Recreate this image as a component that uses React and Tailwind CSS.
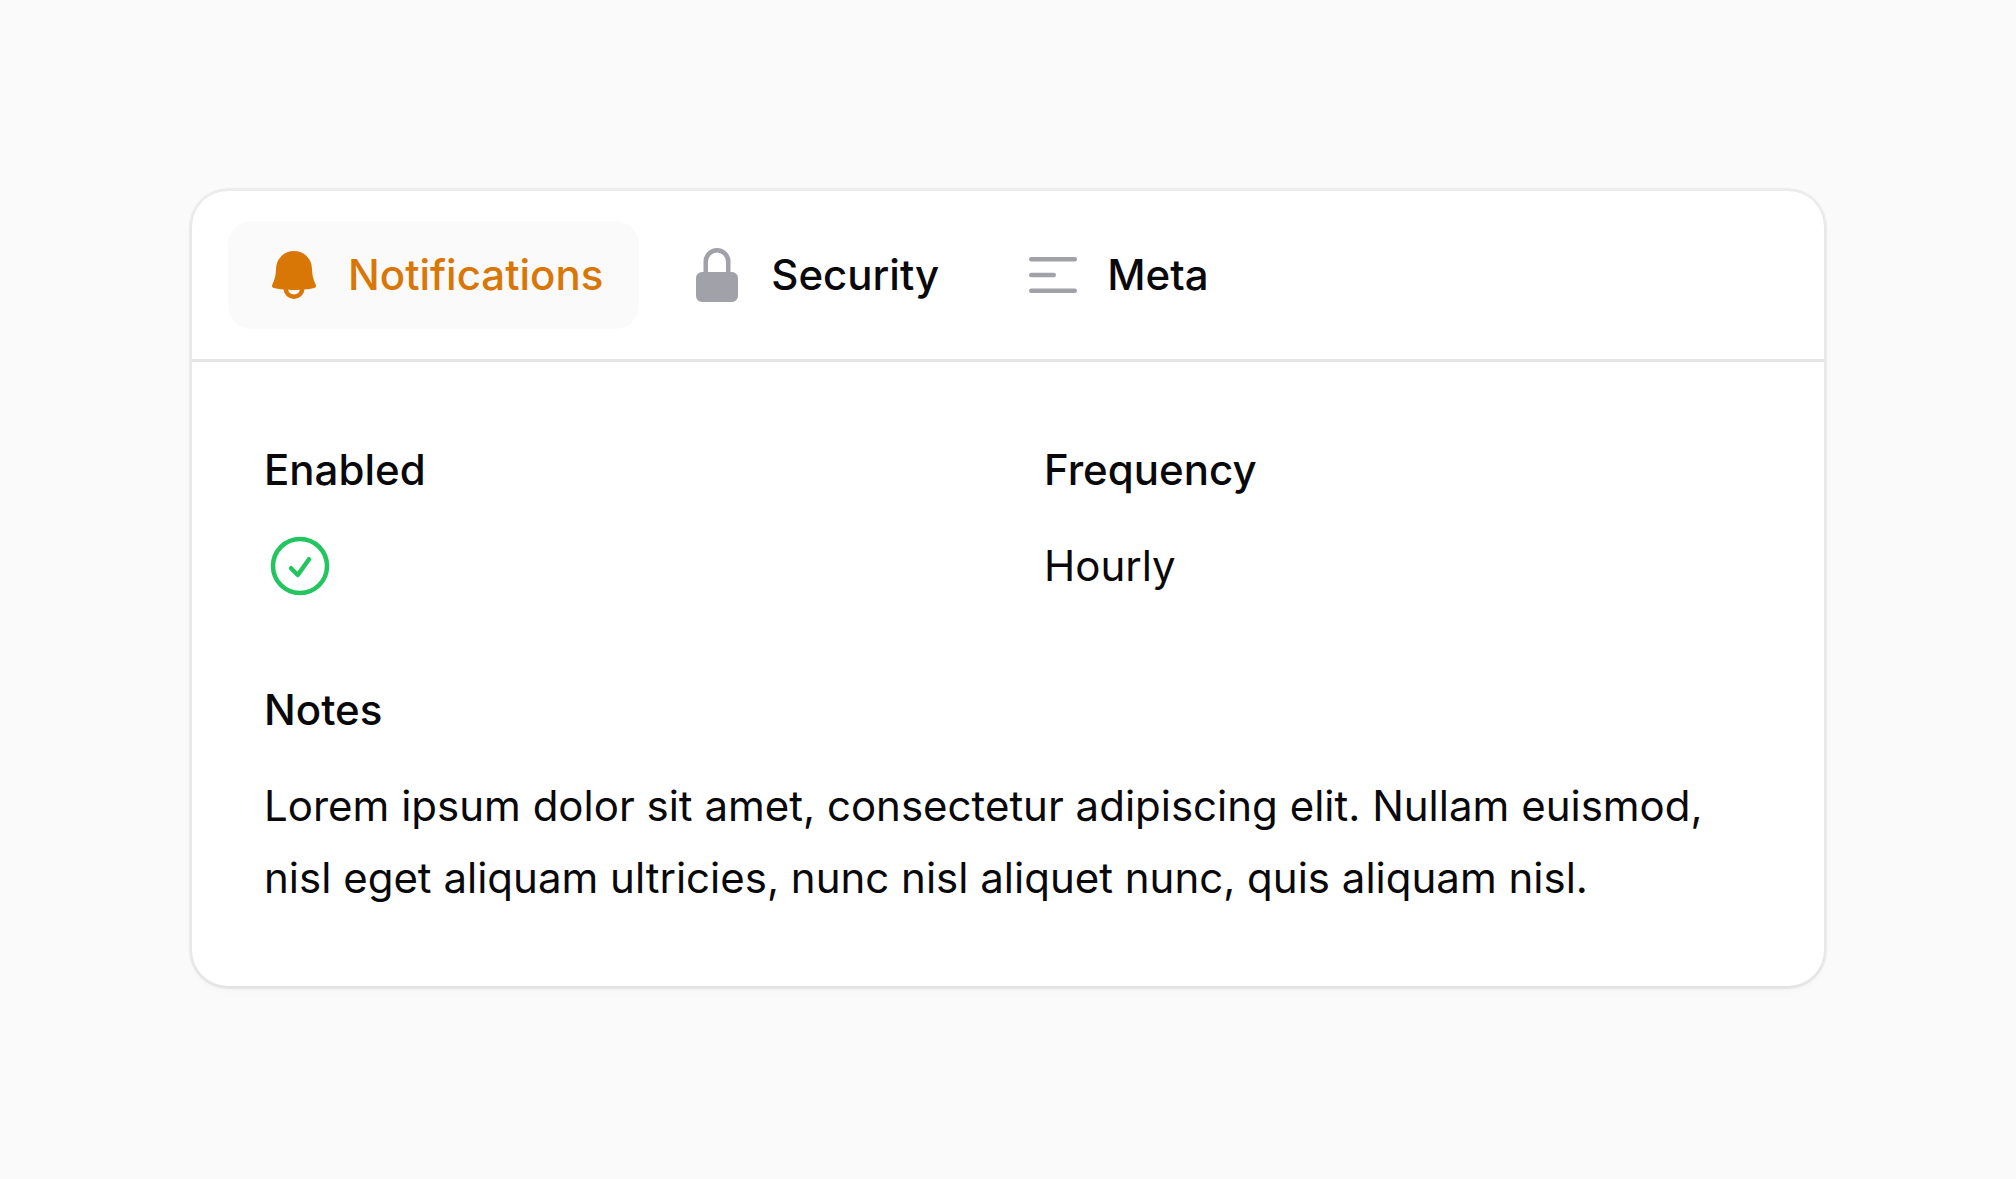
import { useState } from 'react';
import { HiMiniBars3CenterLeft, HiMiniBell, HiMiniLockClosed, HiOutlineCheckCircle } from 'react-icons/hi2';

const tabs = [
    { id: 'notifications', label: 'Notifications', Icon: HiMiniBell },
    { id: 'security', label: 'Security', Icon: HiMiniLockClosed },
    { id: 'meta', label: 'Meta', Icon: HiMiniBars3CenterLeft },
];

function Entry({ label, className, children }) {
    return (
        <div className={className}>
            <dt className="font-medium">{label}</dt>
            <dd className="mt-6">{children}</dd>
        </div>
    )
}

export default function App(){
    const [active, setActive] = useState('notifications');

    return(
        <div className="min-h-screen bg-[#fafafa] px-48 pt-[191px] pb-48 font-['Inter',sans-serif] text-[42px] leading-[72px] text-zinc-950">
            <div className="rounded-[36px] bg-white shadow-[0_3px_6px_0_rgb(0_0_0/0.05)] ring-3 ring-zinc-950/5">
                <div role="tablist" aria-label="Settings" className="flex gap-3 border-b-3 border-[#e4e4e5] px-9 py-[30px]">
                    {tabs.map(({ id, label, Icon }) => (
                        <button
                            key={id}
                            type="button"
                            role="tab"
                            aria-selected={active === id}
                            onClick={() => setActive(id)}
                            className={
                                active === id
                                    ? 'flex items-center gap-6 rounded-3xl bg-[#fafafa] px-9 py-[18px] font-medium text-[#d97706]'
                                    : 'flex items-center gap-6 rounded-3xl px-9 py-[18px] font-medium'
                            }
                        >
                            <Icon className={active === id ? 'size-[60px]' : 'size-[60px] text-[#a1a1aa]'} aria-hidden="true" />
                            {label}
                        </button>
                    ))}
                </div>
                <dl role="tabpanel" className="grid grid-cols-2 gap-[72px] p-[72px]">
                    <Entry label="Enabled">
                        <HiOutlineCheckCircle className="size-[72px] text-[#22c55e]" role="img" aria-label="Yes" />
                    </Entry>
                    <Entry label="Frequency">Hourly</Entry>
                    <Entry label="Notes" className="col-span-2">
                        Lorem ipsum dolor sit amet, consectetur adipiscing elit. Nullam euismod, nisl eget aliquam ultricies, nunc nisl aliquet nunc, quis aliquam nisl.
                    </Entry>
                </dl>
            </div>
        </div>
    )
}
